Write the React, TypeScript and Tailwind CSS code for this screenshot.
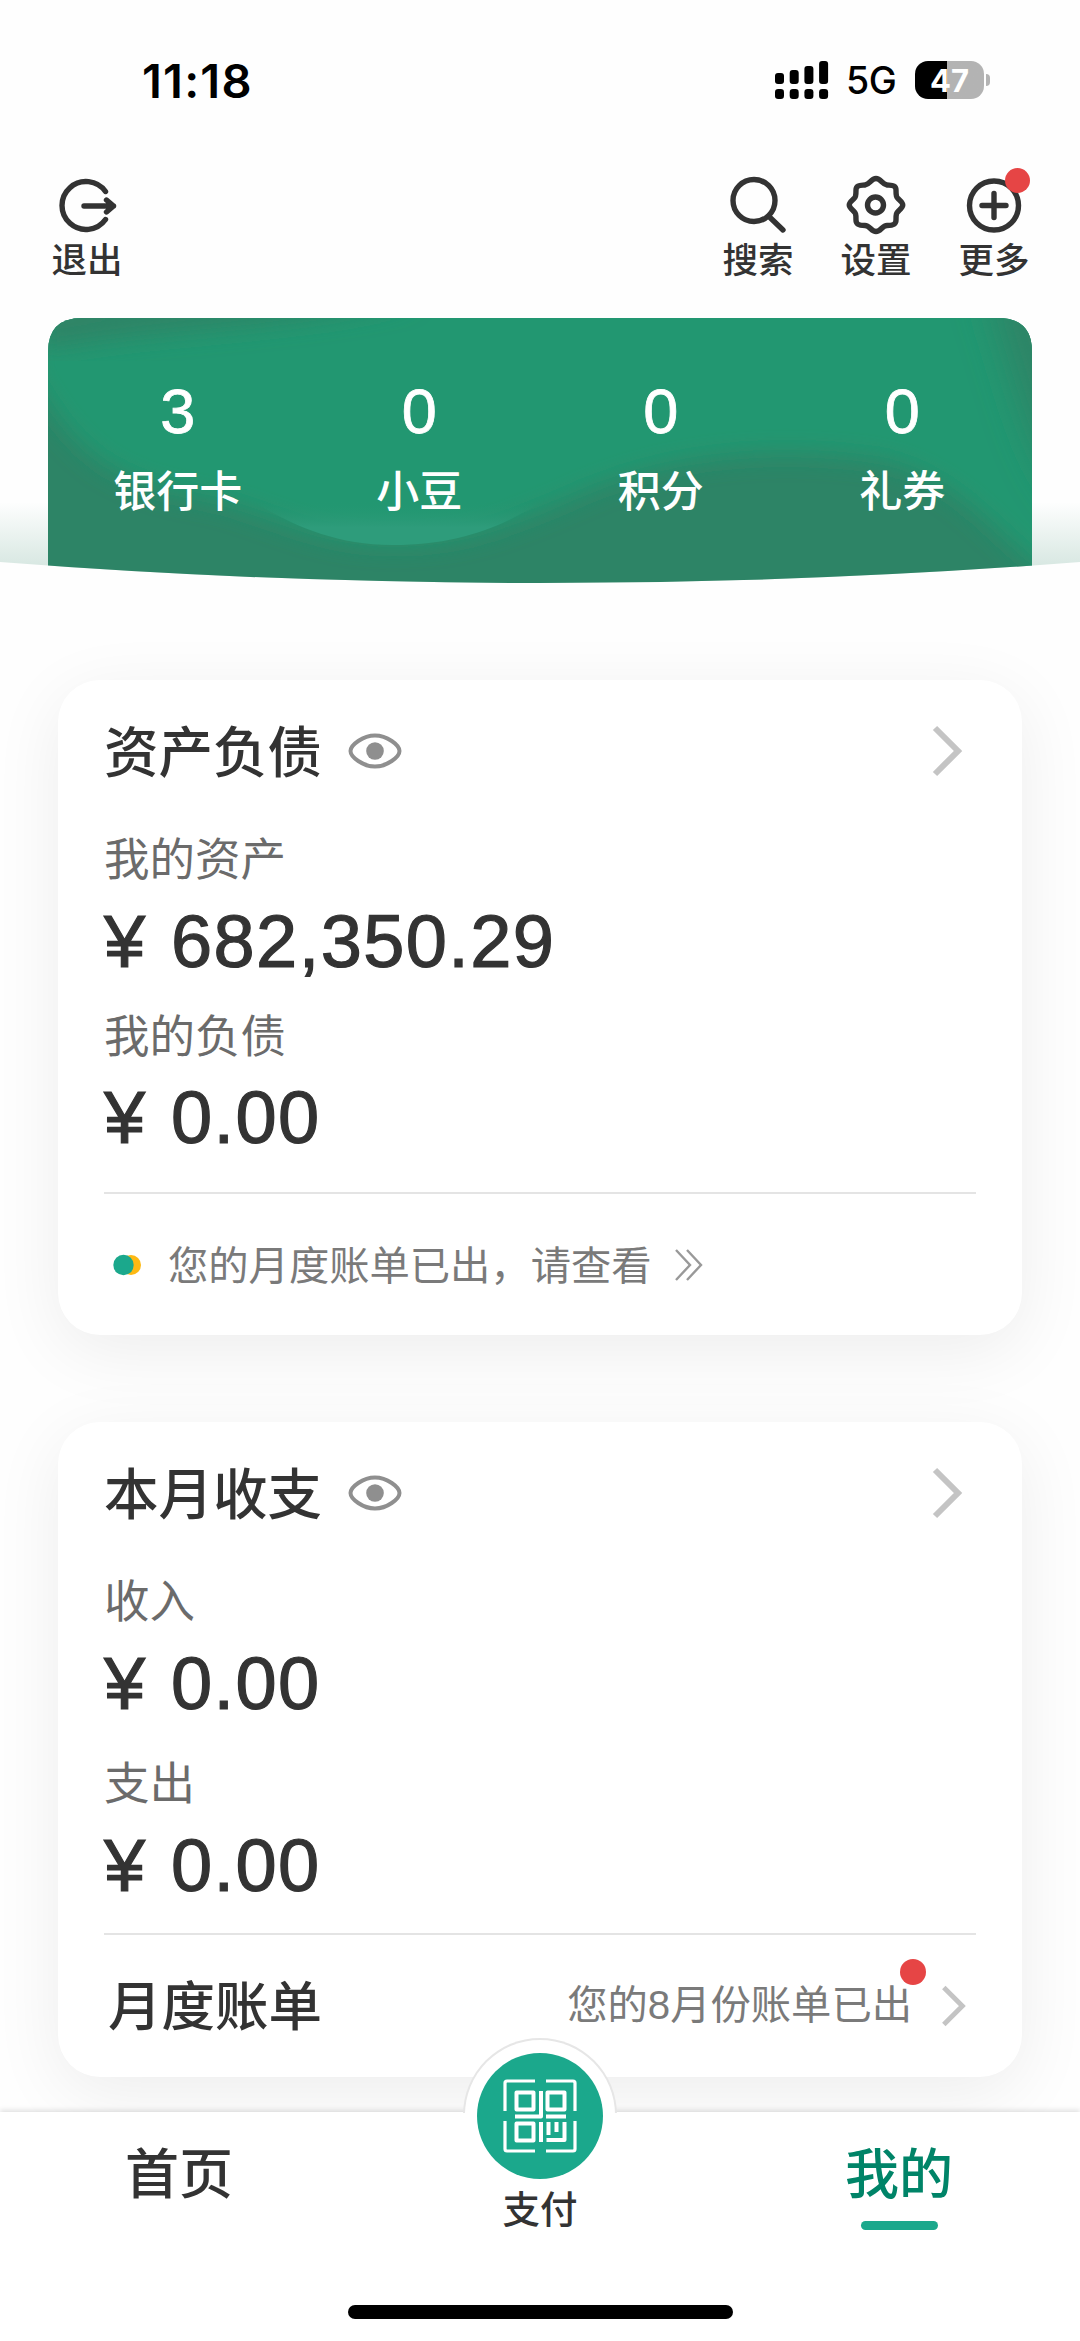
import type { ReactNode } from "react";

interface Stat {
  value: string;
  label: string;
}

const stats: Stat[] = [
  { value: "3", label: "银行卡" },
  { value: "0", label: "小豆" },
  { value: "0", label: "积分" },
  { value: "0", label: "礼券" },
];

export default function App() {
  return (
    <div className="w-[1080px] h-[2341px] flex flex-col overflow-hidden bg-[#fefefe] text-[#333] font-['Noto_Sans_CJK_SC',sans-serif]">
      <StatusBar />
      <TopActions />
      <Banner />

      <main className="h-[1502px] shrink-0 px-[58px] pt-[70px] flex flex-col gap-[87px]">
        <Card>
          <CardHeader title="资产负债" />
          <Label className="mt-[34px]">我的资产</Label>
          <Amount className="mt-[20px]">682,350.29</Amount>
          <Label className="mt-[33px]">我的负债</Label>
          <Amount className="mt-[19px]">0.00</Amount>
          <div className="mt-[35px] h-[2px] bg-[#e4e4e4]" />
          <div className="h-[141px] flex items-center">
            <NoticeDots />
            <span className="ml-[25px] text-[40.3px] leading-[60px] -mt-[4px] text-[#7a7a7a]">
              您的月度账单已出，请查看
            </span>
            <svg width="32" height="34" viewBox="0 0 32 34" fill="none" stroke="#999" strokeWidth="2.4" className="ml-[22px]">
              <path d="M2 2 L16 17 L2 32 M13 2 L27 17 L13 32" />
            </svg>
          </div>
        </Card>

        <Card>
          <CardHeader title="本月收支" />
          <Label className="mt-[34px]">收入</Label>
          <Amount className="mt-[20px]">0.00</Amount>
          <Label className="mt-[38px]">支出</Label>
          <Amount className="mt-[20px]">0.00</Amount>
          <div className="mt-[28px] h-[2px] bg-[#e4e4e4]" />
          <div className="h-[141px] flex items-center justify-between pl-[4px] pr-[9px]">
            <span className="text-[53.5px] leading-[60px] -mt-[6px] font-medium">月度账单</span>
            <div className="relative flex items-center">
              <span className="text-[40.3px] leading-[60px] -mt-[4px] text-[#7a7a7a]">
                您的<span className="font-['Liberation_Sans',sans-serif]">8</span>月份账单已出
              </span>
              <span className="absolute right-[41px] -top-[17px] size-[26px] rounded-full bg-[#e64545]" />
              <Chevron className="ml-[28px] w-[27px] h-[42px]" />
            </div>
          </div>
        </Card>
      </main>

      <TabBar />
    </div>
  );
}

function StatusBar() {
  return (
    <header className="h-[162px] shrink-0 pl-[142px] pr-[90px] pb-[2px] flex items-center justify-between text-black font-[Inter,sans-serif]">
      <span className="text-[47px] font-semibold leading-none tracking-[1.2px]">11:18</span>
      <div className="flex items-center">
        <svg width="54" height="38" viewBox="0 0 54 38">
          {[12, 9, 5, 0].map((y, i) => (
            <g key={y}>
              <rect x={i * 14.7} y={y} width="9" height={23 - y} rx="3" />
              <rect x={i * 14.7} y="28" width="9" height="10" rx="3.2" />
            </g>
          ))}
        </svg>
        <span className="ml-[17px] mt-[2px] w-[51px] text-[37.5px] font-medium leading-none tracking-[-0.5px]">5G</span>
        <div className="ml-[18px] w-[69px] h-[38px] rounded-[13px] overflow-hidden bg-linear-to-r from-black from-47% to-[#b3b3b3] to-47% flex items-center justify-center text-white text-[31px] font-bold leading-none">
          47
        </div>
        <div className="ml-[2px] w-[4px] h-[12px] rounded-r-full bg-[#b3b3b3]" />
      </div>
    </header>
  );
}

function TopActions() {
  return (
    <nav className="h-[156px] shrink-0 pl-[51px] pr-[50px] flex justify-between">
      <Action label="退出">
        <path d="M54.500 19.500 A24 24 0 1 0 54.500 47.500" />
        <path d="M33 34 H62.500 M55.500 28 L62.500 34 L55.500 40" />
      </Action>
      <div className="flex gap-[46px]">
        <Action label="搜索">
          <circle cx="32" cy="28.500" r="21" />
          <path d="M47.500 45 L61 58" />
        </Action>
        <Action label="设置">
          <circle cx="35.500" cy="33" r="8" />
          <path d="M36 6.500 C41 6.500 42 12.500 47 13 C52 13.500 56 13 56 18 C56 25 56.500 25 59 27.500 C64 32 64 34 59 38.500 C56.500 41 56 41 56 48 C56 53 52 53.500 47 53.500 C42 53.500 41 59.500 36 59.500 C31 59.500 30 53.500 25 53.500 C20 53.500 16 53 16 48 C16 41 15.500 41 13 38.500 C8 34 8 32 13 27.500 C15.500 25 16 25 16 18 C16 13 20 13.500 25 13 C30 12.500 31 6.500 36 6.500 Z" />
        </Action>
        <div className="relative">
          <Action label="更多">
            <circle cx="36" cy="33.500" r="24.500" />
            <path d="M36 21.500 V45.500 M24 33.500 H48" />
          </Action>
          <span className="absolute left-[47px] top-[6px] size-[25px] rounded-full bg-[#e64545]" />
        </div>
      </div>
    </nav>
  );
}

function Action({ label, children }: { label: string; children: ReactNode }) {
  return (
    <div className="w-[72px] pt-[10px] flex flex-col items-center">
      <svg
        width="72"
        height="66"
        viewBox="0 0 72 66"
        fill="none"
        stroke="#333"
        strokeWidth="5.4"
        strokeLinecap="round"
        strokeLinejoin="round"
      >
        {children}
      </svg>
      <span className="text-[35.5px] leading-[40px] font-medium whitespace-nowrap">{label}</span>
    </div>
  );
}

function Banner() {
  return (
    <section className="relative h-[292px] shrink-0 px-[57px]">
      {/* 绿色背景与底部弧线 */}
      <svg className="absolute inset-0" width="1080" height="292" viewBox="0 0 1080 292">
        <defs>
          <clipPath id="arc">
            <path d="M0 0 H1080 V244 Q540 286 0 244 Z" />
          </clipPath>
          <clipPath id="panel">
            <path d="M48 292 V34 Q48 0 82 0 H998 Q1032 0 1032 34 V292 Z" />
          </clipPath>
          <linearGradient id="mist" x1="0" y1="0" x2="0" y2="1">
            <stop offset="0" stopColor="#2d8465" stopOpacity="0" />
            <stop offset="1" stopColor="#2d8465" stopOpacity="0.24" />
          </linearGradient>
          <linearGradient id="glow" x1="0" y1="0" x2="0" y2="1">
            <stop offset="0.5" stopColor="#249771" stopOpacity="0" />
            <stop offset="0.8" stopColor="#2e9c7b" />
          </linearGradient>
          <filter id="soft" x="-20%" y="-20%" width="140%" height="140%">
            <feGaussianBlur stdDeviation="12" />
          </filter>
          <filter id="softer" x="-100%" y="-50%" width="300%" height="200%">
            <feGaussianBlur stdDeviation="18" />
          </filter>
        </defs>
        <g clipPath="url(#arc)">
          <rect y="184" width="1080" height="84" fill="url(#mist)" />
          <g clipPath="url(#panel)">
            <rect x="48" width="984" height="292" fill="#2d8466" />
            <path
              d="M30 -30 H1060 V260 C1010 240 970 160 880 142 C770 126 660 138 570 180 C500 210 460 225 390 225 C320 225 270 195 215 182 C120 165 80 145 30 55 Z"
              fill="#249771"
              filter="url(#soft)"
            />
            <path
              d="M170 140 C240 165 290 227 393 227 C480 227 530 195 590 150 Z"
              fill="url(#glow)"
            />
            <path d="M40 -20 H420 C300 10 150 10 40 32 Z" fill="#2d8466" filter="url(#soft)" />
            <path d="M985 -30 H1080 V190 C1030 150 1018 60 985 -30 Z" fill="#2d8466" filter="url(#softer)" />
          </g>
        </g>
      </svg>
      <div className="relative h-full flex">
        {stats.map((s) => (
          <div key={s.label} className="flex-1 pt-[58px] flex flex-col items-center text-white">
            <span className="h-[70px] text-[63px] leading-[70px] font-['Liberation_Sans',sans-serif] [-webkit-text-stroke:0.8px_white]">
              {s.value}
            </span>
            <span className="mt-[12px] text-[43px] leading-[60px] font-medium">{s.label}</span>
          </div>
        ))}
      </div>
    </section>
  );
}

function Card({ children }: { children: ReactNode }) {
  return (
    <section className="h-[655px] shrink-0 rounded-[42px] bg-white px-[46px] shadow-[0_16px_70px_rgba(0,0,0,0.07)]">
      {children}
    </section>
  );
}

function CardHeader({ title }: { title: string }) {
  return (
    <div className="h-[123px] pt-[19px] pr-[13px] flex items-center">
      <h2 className="w-[218px] text-[54.5px] leading-[60px] -mt-[5px] font-medium">{title}</h2>
      <svg width="54" height="36" viewBox="0 0 54 36" fill="none" className="ml-[26px]">
        <path
          d="M2.500 18 C2.500 12 15 2.500 27 2.500 C39 2.500 51.500 12 51.500 18 C51.500 24 39 33.500 27 33.500 C15 33.500 2.500 24 2.500 18 Z"
          stroke="#8f8f8f"
          strokeWidth="4"
        />
        <circle cx="27" cy="18" r="8.800" fill="#8f8f8f" />
      </svg>
      <Chevron className="ml-auto w-[32px] h-[52px]" />
    </div>
  );
}

function Label({ className, children }: { className: string; children: ReactNode }) {
  return (
    <div className={`${className} h-[44px] text-[45.5px] leading-[38px] text-[#6b6b6b]`}>
      {children}
    </div>
  );
}

function Amount({ className, children }: { className: string; children: ReactNode }) {
  return (
    <div
      className={`${className} h-[80px] flex text-[74px] leading-[82px] font-['Liberation_Sans',sans-serif] [-webkit-text-stroke:1.2px_#333]`}
    >
      <span className="w-[67px]">¥</span>
      <span className="tracking-[1.4px]">{children}</span>
    </div>
  );
}

function Chevron({ className }: { className: string }) {
  return (
    <svg viewBox="0 0 32 52" fill="none" stroke="#c4c4c4" strokeWidth="6" className={className}>
      <path d="M4 3 L27 26 L4 49" />
    </svg>
  );
}

function NoticeDots() {
  return (
    <svg width="30" height="22" viewBox="0 0 30 22" className="ml-[9px]">
      <circle cx="18" cy="11" r="10" fill="#fdb913" />
      <circle cx="10.500" cy="11" r="10.200" fill="#1ba88c" />
    </svg>
  );
}

function TabBar() {
  return (
    <footer className="relative h-[229px] shrink-0 bg-white flex justify-between px-[117px] shadow-[0_-2px_5px_rgba(0,0,0,0.12)]">
      <Tab label="首页" />
      <div className="absolute left-[465px] -top-[72px] flex flex-col items-center">
        {/* 凸起的半圆 */}
        <div className="size-[150px] rounded-full bg-white shadow-[0_0_0_2px_#e6e6e6] [clip-path:inset(-4px_-4px_77px_-4px)]" />
        {/* 付款码按钮 */}
        <div className="relative -mt-[137px] size-[126px] rounded-full bg-[#1ba88c] flex items-center justify-center">
          <QrIcon />
        </div>
        <span className="mt-[6px] text-[37.5px] leading-[44px] font-medium">支付</span>
      </div>
      <Tab label="我的" active />
      <div className="absolute left-[348px] top-[193px] w-[385px] h-[14px] rounded-full bg-black" />
    </footer>
  );
}

function Tab({ label, active }: { label: string; active?: boolean }) {
  return (
    <div className={`w-[124px] pt-[29px] flex flex-col items-center ${active ? "-mr-[-2px] text-[#008468]" : ""}`}>
      <span className="text-[54px] leading-[60px] font-medium">{label}</span>
      {active && <span className="mt-[20px] w-[77px] h-[9px] rounded-full bg-[#1ba88c]" />}
    </div>
  );
}

function QrIcon() {
  return (
    <svg width="74" height="74" viewBox="0 0 74 74" fill="none" stroke="white" strokeWidth="3.200" strokeLinejoin="round">
      <path d="M2 32 V4 Q2 2 4 2 H32 M43 2 H70 Q72 2 72 4 V32 M72 42 V70 Q72 72 70 72 H43 M32 72 H4 Q2 72 2 70 V42" />
      <g strokeWidth="4">
        <rect x="13.500" y="13.500" width="17" height="17" />
        <rect x="44.500" y="13.500" width="17" height="17" />
        <rect x="13.500" y="44.500" width="17" height="17" />
        <path d="M38 12 V37.500 H12 M43 37.500 H63 M38 43 V63 M45.500 43 V56 M53.500 43 V53 M61.500 43 V61 H43.500" />
      </g>
    </svg>
  );
}
